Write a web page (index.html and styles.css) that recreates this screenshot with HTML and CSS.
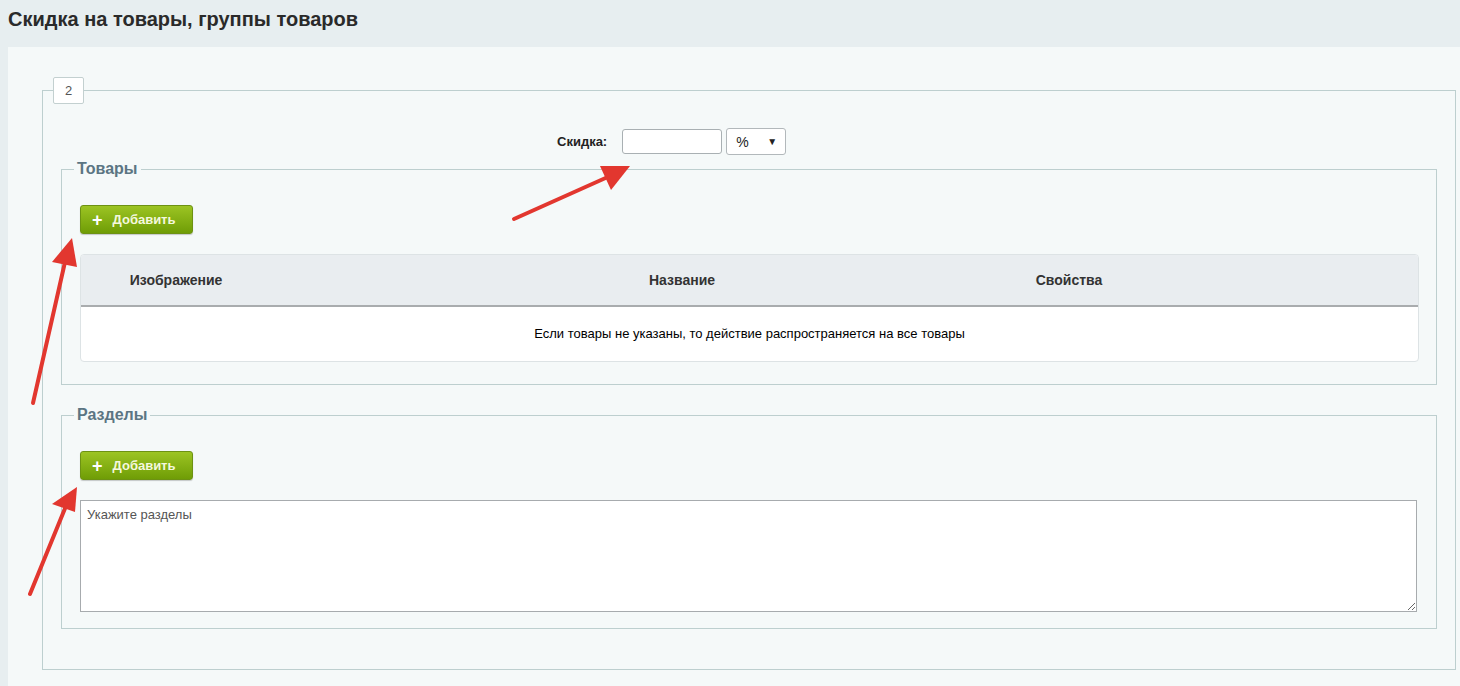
FILE: index.html
```html
<!DOCTYPE html>
<html lang="ru">
<head>
    <meta charset="UTF-8">
    <title>Скидка на товары, группы товаров</title>
    <link rel="stylesheet" href="styles.css">
</head>
<body>
    <h1 class="page-title">Скидка на товары, группы товаров</h1>

    <div class="panel">
        <fieldset class="outer">
            <legend class="step">2</legend>
            <div class="outer-body">
                <div class="discount-row">
                    <label class="discount-label" for="discount">Скидка:</label>
                    <input type="text" id="discount" class="discount-input">
                    <div class="unit-select">
                        <span>%</span>
                        <span class="caret">▼</span>
                    </div>
                </div>

                <fieldset class="group">
                    <legend class="group-title">Товары</legend>
                    <div class="group-body">
                        <button class="add-button"><span class="plus">+</span>Добавить</button>
                        <div class="goods-table">
                            <div class="goods-head">
                                <div class="cell">Изображение</div>
                                <div class="cell"></div>
                                <div class="cell">Название</div>
                                <div class="cell">Свойства</div>
                                <div class="cell"></div>
                            </div>
                            <div class="goods-empty">Если товары не указаны, то действие распространяется на все товары</div>
                        </div>
                    </div>
                </fieldset>

                <fieldset class="group">
                    <legend class="group-title">Разделы</legend>
                    <div class="group-body sections-body">
                        <button class="add-button"><span class="plus">+</span>Добавить</button>
                        <textarea class="sections" placeholder="Укажите разделы"></textarea>
                    </div>
                </fieldset>
            </div>
        </fieldset>
    </div>

    <svg class="arrows" width="1460" height="686" viewBox="0 0 1460 686" xmlns="http://www.w3.org/2000/svg">
        <g stroke="#e2372f" stroke-width="4" stroke-linecap="round" fill="none">
            <line x1="514" y1="219" x2="610" y2="176"/>
            <line x1="33" y1="403" x2="65" y2="262"/>
            <line x1="30" y1="594" x2="66" y2="506"/>
        </g>
        <g fill="#e2372f">
            <polygon points="630,166 600,166 611,190"/>
            <polygon points="72,238 52,262 77,267"/>
            <polygon points="77,487 52,504 75,512"/>
        </g>
    </svg>
</body>
</html>
```

FILE: styles.css
```css
body {
    margin: 0;
    background: #e7eef0;
    font-family: Arial, "Liberation Sans", sans-serif;
    color: #000;
    overflow: hidden;
    position: relative;
    min-height: 686px;
}

.page-title {
    margin: 0;
    padding: 7px 8px 0;
    height: 40px;
    font-size: 20px;
    line-height: 24px;
    font-weight: bold;
    color: #2a2a2a;
}

.panel {
    margin-left: 8px;
    background: #f5f9f9;
    padding: 30px 4px 16px 34px;
    min-height: 620px;
    box-sizing: border-box;
}

fieldset {
    margin: 0;
    padding: 0;
    min-width: 0;
    border: 1px solid #bdcfcf;
}

.outer {
    height: 593px;
    box-sizing: border-box;
}

.step {
    margin-left: 10px;
    margin-right: auto;
    padding: 0 11px;
    height: 25px;
    line-height: 25px;
    background: #fff;
    border: 1px solid #c3d0d0;
    border-radius: 2px;
    font-size: 13px;
    color: #555;
}

.outer-body {
    padding: 24px 18px 0;
}

.discount-row {
    display: flex;
    align-items: center;
    padding-left: 496px;
}

.discount-label {
    font-size: 13px;
    font-weight: bold;
    color: #222;
    margin-right: 15px;
}

.discount-input {
    width: 100px;
    height: 25px;
    box-sizing: border-box;
    border: 1px solid #a9b0b3;
    border-radius: 3px;
    background: #fff;
    margin: 0 4px 0 0;
}

.unit-select {
    display: flex;
    justify-content: space-between;
    align-items: center;
    width: 60px;
    height: 27px;
    box-sizing: border-box;
    padding: 0 8px 0 9px;
    border: 1px solid #b2b8bb;
    border-radius: 3px;
    background: #fff;
    font-size: 14px;
    color: #222;
}

.unit-select .caret {
    font-size: 10px;
}

.group {
    margin-top: 5px;
}

.group + .group {
    margin-top: 21px;
}

.group-title {
    margin-left: 12px;
    margin-right: auto;
    padding: 0 3px;
    font-size: 16px;
    line-height: 18px;
    font-weight: bold;
    color: #5b7583;
}

.group-body {
    padding: 27px 17px 22px 18px;
}

.sections-body {
    padding-right: 19px;
    padding-bottom: 16px;
}

.add-button {
    display: flex;
    align-items: center;
    height: 29px;
    width: 113px;
    padding: 0 0 0 11px;
    border: 1px solid #6d9213;
    border-radius: 3px;
    background: linear-gradient(#9cc423, #6f9d06);
    box-shadow: 0 1px 1px rgba(0, 0, 0, 0.2);
    color: #f4f8de;
    font-family: Arial, "Liberation Sans", sans-serif;
    font-size: 13px;
    font-weight: bold;
    cursor: pointer;
}

.plus {
    font-size: 18px;
    line-height: 18px;
    color: #fff;
    margin-right: 10px;
}

.goods-table {
    margin-top: 20px;
    background: #fff;
    border: 1px solid #dde3e5;
    border-radius: 4px;
    overflow: hidden;
}

.goods-head {
    display: grid;
    grid-template-columns: 190px 75px 672px 102px 1fr;
    height: 50px;
    align-items: center;
    background: #e9edf0;
    border-bottom: 2px solid #a9acae;
}

.goods-head .cell {
    text-align: center;
    font-size: 14px;
    font-weight: bold;
    color: #333;
    white-space: nowrap;
}

.goods-empty {
    height: 54px;
    line-height: 54px;
    text-align: center;
    font-size: 13px;
    color: #000;
}

.sections {
    display: block;
    width: 100%;
    height: 112px;
    margin-top: 20px;
    box-sizing: border-box;
    border: 1px solid #a7abae;
    padding: 6px;
    font-family: Arial, "Liberation Sans", sans-serif;
    font-size: 13px;
    background: #fff;
}

.sections::placeholder {
    color: #555;
}

.arrows {
    position: absolute;
    left: 0;
    top: 0;
    pointer-events: none;
}
```
